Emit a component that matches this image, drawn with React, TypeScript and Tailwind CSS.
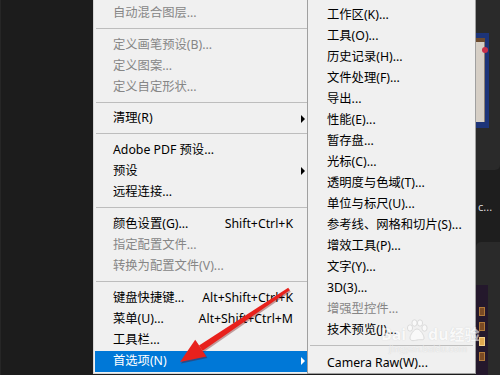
type Item = { t: string; d?: boolean; sub?: boolean; k?: string; active?: boolean } | 'sep';

const leftItems: Item[] = [
  { t: '自动混合图层...', d: true },
  'sep',
  { t: '定义画笔预设(B)...', d: true },
  { t: '定义图案...', d: true },
  { t: '定义自定形状...', d: true },
  'sep',
  { t: '清理(R)', sub: true },
  'sep',
  { t: 'Adobe PDF 预设...' },
  { t: '预设', sub: true },
  { t: '远程连接...' },
  'sep',
  { t: '颜色设置(G)...', k: 'Shift+Ctrl+K' },
  { t: '指定配置文件...', d: true },
  { t: '转换为配置文件(V)...', d: true },
  'sep',
  { t: '键盘快捷键...', k: 'Alt+Shift+Ctrl+K' },
  { t: '菜单(U)...', k: 'Alt+Shift+Ctrl+M' },
  { t: '工具栏...' },
  { t: '首选项(N)', sub: true, active: true },
];

const subItems: Item[] = [
  { t: '工作区(K)...' },
  { t: '工具(O)...' },
  { t: '历史记录(H)...' },
  { t: '文件处理(F)...' },
  { t: '导出...' },
  { t: '性能(E)...' },
  { t: '暂存盘...' },
  { t: '光标(C)...' },
  { t: '透明度与色域(T)...' },
  { t: '单位与标尺(U)...' },
  { t: '参考线、网格和切片(S)...' },
  { t: '增效工具(P)...' },
  { t: '文字(Y)...' },
  { t: '3D(3)...' },
  { t: '增强型控件...', d: true },
  { t: '技术预览(J)...' },
  'sep',
  { t: 'Camera Raw(W)...' },
];

function LeftMenu() {
  return (
    <div className="w-[214px] h-[374px] shrink-0 bg-[#f0f0f0] border-l border-b border-[#d6d6d6] pl-px pt-[2.7px] flex flex-col">
      {leftItems.map((it, i) =>
        it === 'sep' ? (
          <div key={i} className="h-[10.3px] shrink-0 pt-[4px] pl-px">
            <div className="h-px bg-[#bdbdbd]" />
          </div>
        ) : (
          <div
            key={i}
            className={`h-[21.2px] shrink-0 flex items-center pl-[18px] ${
              it.active ? 'bg-[#0078d7] text-white' : it.d ? 'text-[#868686]' : 'text-black'
            }`}
          >
            <span className="flex-1 whitespace-nowrap">{it.t}</span>
            {it.k && <span className="mr-[14px] whitespace-nowrap">{it.k}</span>}
            {it.sub && (
              <span
                className={`w-0 h-0 mr-[2px] border-y-[4px] border-y-transparent border-l-[4px] ${
                  it.active ? 'border-l-white' : 'border-l-black'
                }`}
              />
            )}
          </div>
        )
      )}
    </div>
  );
}

function SubMenu() {
  return (
    <div className="w-[169px] h-[374px] shrink-0 bg-[#f0f0f0] border-x border-b border-[#a0a0a0] px-[2px] pt-[4.5px] flex flex-col">
      {subItems.map((it, i) =>
        it === 'sep' ? (
          <div key={i} className="h-[12px] shrink-0 pt-[4px]">
            <div className="h-px bg-[#bdbdbd]" />
          </div>
        ) : (
          <div
            key={i}
            className={`h-[21px] shrink-0 flex items-center pl-[17px] whitespace-nowrap ${
              it.d ? 'text-[#868686]' : 'text-black'
            }`}
          >
            {it.t}
          </div>
        )
      )}
    </div>
  );
}

function RightStrip() {
  return (
    <div className="w-[24px] h-[375px] shrink-0 flex flex-col bg-[#1e1e1e]">
      <div className="h-[172px] bg-[#2a2a2a] rounded-br-[5px] pt-[33px]">
        <div className="w-[13px] h-[95px] bg-[#1d3478] pt-[5px] relative">
          <div className="w-[9px] h-[4px] bg-[#6b4a2e]" />
          <div className="w-[9px] h-[80px] bg-[#d6cfc6] border-r border-[#8b7f73]" />
          <div className="absolute right-[1px] top-[14px] w-[6px] h-[6px] rounded-full bg-[#c8304a]" />
        </div>
      </div>
      <div className="h-[73px] flex items-center pl-[2px] text-[11px] text-[#d8d8d8] whitespace-nowrap">c...</div>
      <div className="flex-1 bg-[#2a2a2a] rounded-tl-[5px] pt-[43px]">
        <div className="w-[12px] h-[90px] bg-[#24182c] flex flex-col items-center gap-[6px] pt-[22px]">
          <div className="w-[6px] h-[9px] bg-[#7a4a24] border border-[#b07a3a]" />
          <div className="w-[6px] h-[9px] bg-[#7a4a24] border border-[#b07a3a]" />
          <div className="w-[6px] h-[9px] bg-[#e0a850] border border-[#f3d08a]" />
          <div className="w-[6px] h-[9px] bg-[#7a4a24] border border-[#b07a3a]" />
        </div>
      </div>
    </div>
  );
}

export default function App() {
  return (
    <div
      className="w-[500px] h-[375px] overflow-hidden flex bg-[#1c1c1c] relative text-[12.3px] leading-none"
      style={{ fontFamily: '"Noto Sans", "Noto Sans CJK SC", sans-serif' }}
    >
      <div className="w-[93px] shrink-0 border-l border-[#262626]" />
      <LeftMenu />
      <SubMenu />
      <RightStrip />

      {/* baidu watermark */}
      <div className="absolute left-[381px] top-[318px] flex flex-col items-start text-white opacity-60 pointer-events-none [text-shadow:0_0_1px_#b8b8b8]">
        <div className="flex items-end">
          <span className="text-[16px] font-bold">Bai</span>
          <svg width="24" height="24" viewBox="0 0 24 24" className="-mx-[1px]">
            <g fill="#fff" stroke="#c4c4c4" strokeWidth="0.8">
              <ellipse cx="5" cy="10" rx="2.6" ry="3.2" />
              <ellipse cx="9.5" cy="5" rx="2.6" ry="3.2" />
              <ellipse cx="15" cy="5" rx="2.6" ry="3.2" />
              <ellipse cx="19.5" cy="10" rx="2.6" ry="3.2" />
              <path d="M12 11c-3 0-7 6-7 9s3 3 7 2 7 1 7-2-4-9-7-9z" />
            </g>
          </svg>
          <span className="text-[16px] font-bold">du</span>
          <span className="text-[15px] ml-[1px] font-bold">经验</span>
        </div>
        <span className="text-[9px] ml-[8px] mt-[2px] text-[#f4f4f4]">jingyan.baidu.com</span>
      </div>

      {/* red arrow */}
      <svg className="absolute inset-0 pointer-events-none" width="500" height="375" viewBox="0 0 500 375">
        <g transform="translate(1,1.5)" opacity="0.35" fill="#6a0000">
          <polygon points="289.8,290.2 288.2,287.8 199,345.5 202.6,350.7" />
          <polygon points="180,362 195.2,339.8 206.4,356.4" />
        </g>
        <g fill="#e8211c">
          <polygon points="289.8,290.2 288.2,287.8 199,345.5 202.6,350.7" />
          <polygon points="180,362 195.2,339.8 206.4,356.4" />
        </g>
      </svg>
    </div>
  );
}
